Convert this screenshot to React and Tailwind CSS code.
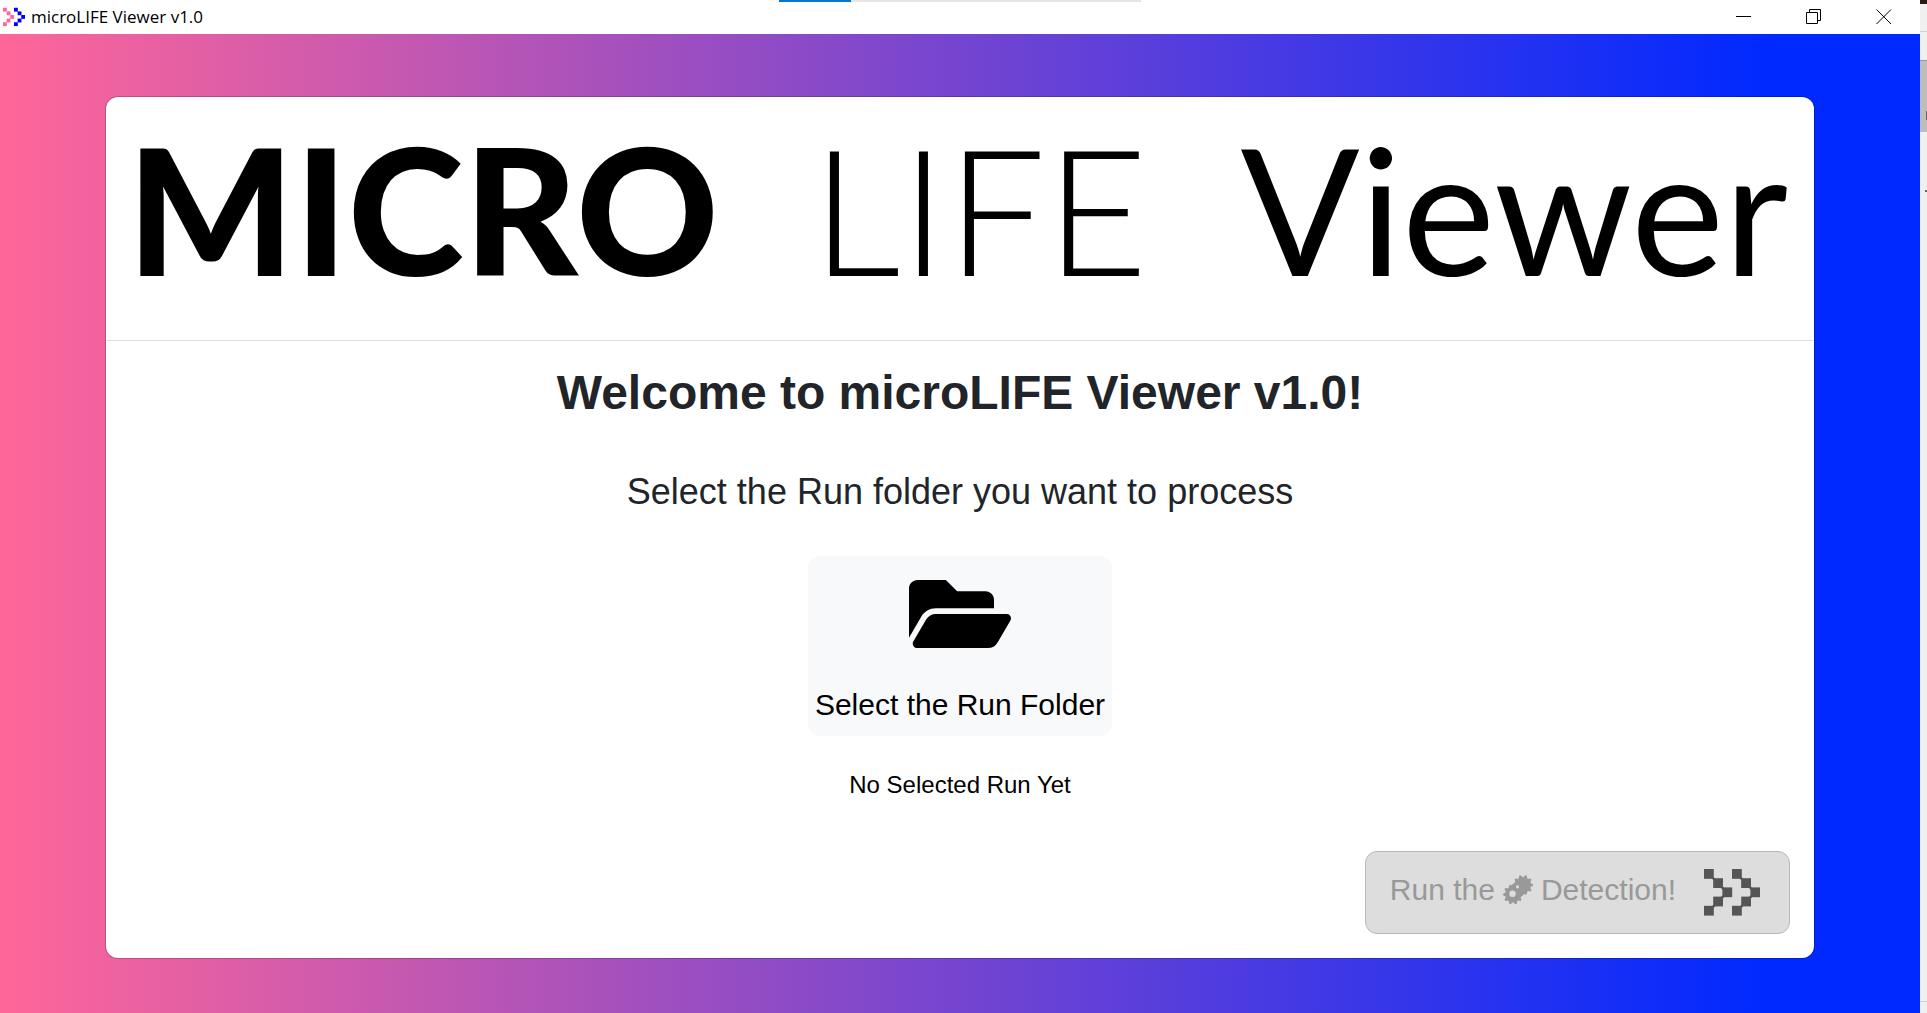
import React from "react";
import { FaFolderOpen } from "react-icons/fa";

const squares = [
  [0, 0],
  [1, 1],
  [2, 2],
  [1, 3],
  [0, 4],
];

function Chevrons({ className, left, right, linked }) {
  return (
    <svg viewBox="0 0 56 47" className={className} aria-hidden="true">
      {[left, right].map((color, i) => (
        <g key={i} fill={color} transform={`translate(${i * 28} 0)`}>
          {linked && (
            <path d="M5 5L23 23.500L5 42" fill="none" stroke={color} strokeWidth="2.500" />
          )}
          {squares.map(([x, y]) => (
            <rect key={`${x}-${y}`} x={x * 9.2} y={y * 9.2} width="9.800" height="9.800" />
          ))}
        </g>
      ))}
    </svg>
  );
}

function gearPath(cx, cy, r, teeth) {
  let d = "";
  for (let i = 0; i < teeth * 4; i++) {
    const angle = ((i - 0.5) * Math.PI) / (teeth * 2);
    const radius = i % 4 < 2 ? r : r * 0.8;
    d += `${i ? "L" : "M"}${cx + radius * Math.cos(angle)} ${cy + radius * Math.sin(angle)}`;
  }
  return d + "Z";
}

function Gears() {
  return (
    <svg viewBox="0 0 30 30" className="h-[30px] w-[30px]" aria-hidden="true">
      <path d={gearPath(20, 10, 10, 10)} fill="#999" />
      <path d={gearPath(10, 19.5, 10, 10)} fill="#999" />
      <path d="M10 19L20 10" stroke="#999" strokeWidth="15" />
      <circle cx="9.500" cy="18.700" r="3.200" fill="#ddd" />
      <circle cx="14.500" cy="11.800" r="1.600" fill="#ddd" />
    </svg>
  );
}

function TitleBar() {
  return (
    <header className="relative flex h-[34px] shrink-0 items-center justify-between bg-white">
      <div className="flex items-center gap-[6px] pl-[3px]">
        <Chevrons className="h-[22px] w-[22px]" left="#ff6699" right="#0000ff" />
        <span className="font-['Open_Sans','Noto_Sans',sans-serif] text-[17px] text-black">
          microLIFE Viewer v1.0
        </span>
      </div>

      {/* Loading progress */}
      <div className="absolute top-0 left-[779px] h-[2px] w-[362px] bg-[#e5e5e5]">
        <div className="h-full w-1/5 bg-[#0078d7]" />
      </div>

      <div className="flex h-full pr-px">
        <button aria-label="Minimize" className="flex w-[70px] items-center justify-center">
          <svg viewBox="0 0 16 16" className="h-4 w-4" stroke="#000" fill="none">
            <path d="M0 7.500H15" />
          </svg>
        </button>
        <button aria-label="Restore" className="flex w-[70px] items-center justify-center">
          <svg viewBox="0 0 16 16" className="h-4 w-4" stroke="#000" fill="none">
            <path d="M.5 3.500H11.500V14.500H.5ZM3.500 3.500V.5H14.500V11.500H11.500" />
          </svg>
        </button>
        <button aria-label="Close" className="flex w-[70px] items-center justify-center">
          <svg viewBox="0 0 16 16" className="h-4 w-4" stroke="#000" fill="none">
            <path d="M.5 .5L15 15M15 .5L.5 15" />
          </svg>
        </button>
      </div>
    </header>
  );
}

export default function App() {
  return (
    <div className="flex min-h-screen bg-[#f0f0f0] font-['Liberation_Sans',sans-serif]">
      <div className="flex min-w-0 flex-1 flex-col">
        <TitleBar />

        <main className="flex flex-1 flex-col bg-[linear-gradient(90deg,#ff6699,#0029ff_92%)] px-[106px] pt-[63px] pb-[55px]">
          <section className="flex flex-1 flex-col rounded-xl bg-white ring-1 ring-black/20">
            <h1 className="flex h-[244px] items-center justify-between border-b border-[#dfdfdf] pr-[26px] pb-[22px] pl-[21px] font-['Lato',sans-serif] text-[176px] leading-none whitespace-nowrap text-black">
              <span className="font-black">MICRO</span>
              <span className="font-light">LIFE</span>
              <span>Viewer</span>
            </h1>

            <div className="flex flex-1 flex-col items-center px-6 pt-[22px] pb-6">
              <h2 className="text-5xl leading-[60px] font-bold text-[#212529]">
                Welcome to microLIFE Viewer v1.0!
              </h2>
              <p className="mt-[42px] text-4xl leading-[54px] text-[#212529]">
                Select the Run folder you want to process
              </p>
              <button className="mt-[37px] flex h-[180px] flex-col items-center rounded-xl bg-[#f8f9fb] px-[7px] pt-[7px] text-black">
                <FaFolderOpen className="h-[102px] w-[102px]" />
                <span className="mt-[17px] text-[30px] leading-[45px]">Select the Run Folder</span>
              </button>
              <p className="mt-[31px] text-2xl leading-[36px] text-black">No Selected Run Yet</p>
              <button
                disabled
                className="mt-auto flex h-[83px] items-center self-end rounded-xl border border-[#b9b9b9] bg-[#ddd] pr-[29px] pl-6 text-[30px] text-[#999]"
              >
                <span className="flex items-center gap-2 pb-[6px]">
                  Run the <Gears /> Detection!
                </span>
                <Chevrons className="ml-[28px] h-[47px] w-[56px]" left="#555" right="#555" linked />
              </button>
            </div>
          </section>
        </main>
      </div>

      {/* Edge of the window behind */}
      <aside className="flex w-[7px] shrink-0 flex-col items-end">
        <div className="h-1 w-full bg-[#2b1a14]" />
        <div className="h-[28px] w-full border-b border-[#d0d0d0]" />
        <div className="h-[28px]" />
        <div className="flex h-[72px] w-full justify-end border-t border-[#999] bg-[#bdbdbd] pt-[50px]">
          <div className="h-[9px] w-px bg-[#666]" />
        </div>
        <div className="mt-[58px] h-[2px] w-[2px] bg-[#666]" />
        <div className="mt-auto mb-[11px] h-px w-full bg-[#d0d0d0]" />
      </aside>
    </div>
  );
}
